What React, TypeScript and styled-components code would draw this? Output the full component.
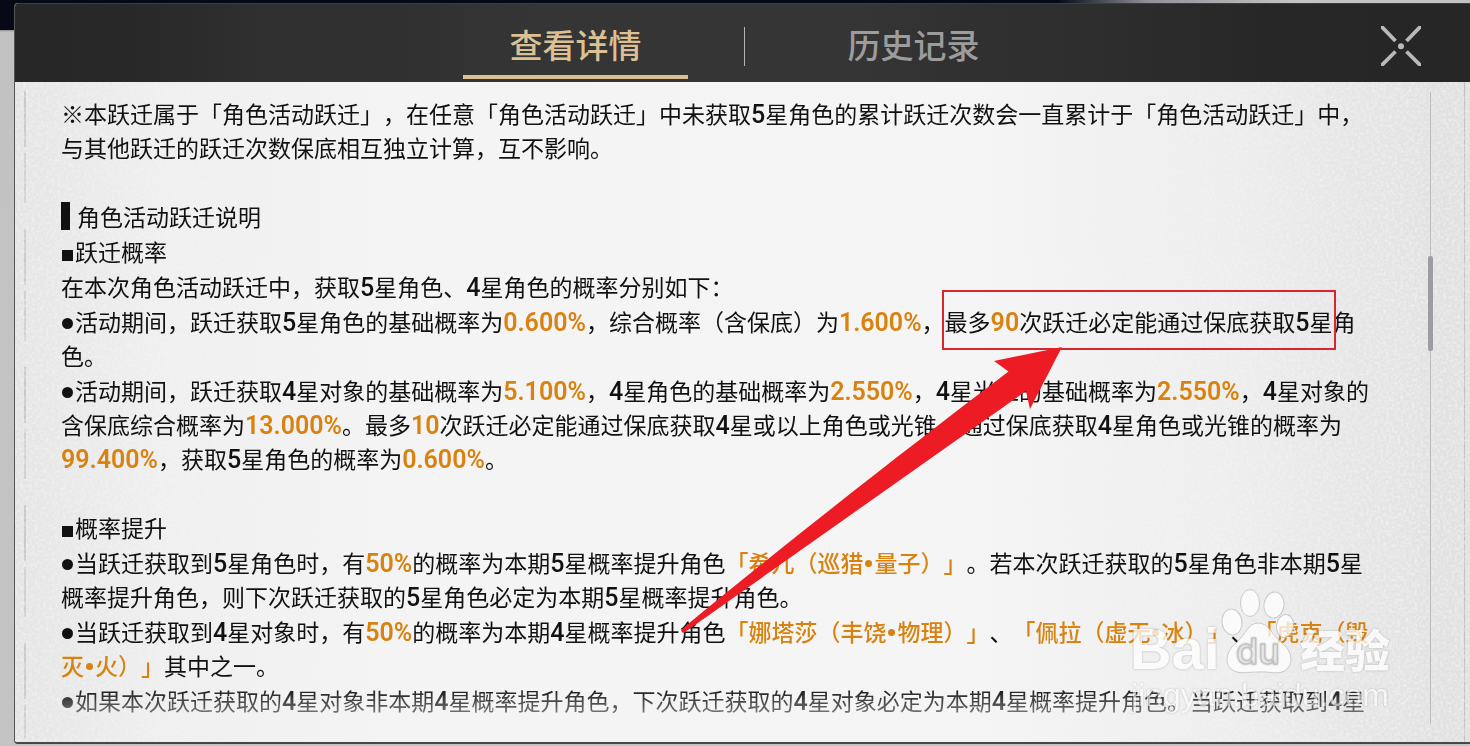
import React from "react";
import styled, { createGlobalStyle } from "styled-components";

const GlobalStyle = createGlobalStyle`
  * { box-sizing: border-box; }
  body {
    margin: 0;
    background: #060a16;
    font-family: "Noto Sans CJK SC", sans-serif;
    text-spacing-trim: space-all;
  }
`;

const Page = styled.div`
  display: flex;
  flex-direction: column;
  min-height: 100vh;
  padding-top: 3px;
  overflow: hidden;
  background: linear-gradient(90deg, #060a16 0%, #060a16 72%, #8f9196 78%, #c4c4c4 88%);
`;

const Stage = styled.div`
  flex: 1;
  display: flex;
  flex-direction: column;
  padding: 0 0 2px 14px;
  background: linear-gradient(180deg, #060a16 0, #060a16 27px, #8c8c8c 27px, #c2c2c2 29px, #c4c4c4 100%);
`;

const Panel = styled.main`
  position: relative;
  flex: 1;
  display: flex;
  flex-direction: column;
  border-left: 1px solid #555;
  border-bottom: 2px solid #46474a;
  border-radius: 4px 0 0 4px;
  overflow: hidden;
  background: #f4f4f4;
`;

const Header = styled.header`
  position: relative;
  z-index: 1;
  height: 79px;
  display: grid;
  grid-template-columns: 1fr auto 1fr;
  padding-left: 4px;
  border-top: 1px solid #3c3d3f;
  background: linear-gradient(90deg, #272727 0%, #282828 8%, #303030 17%, #303030 26%, #353535 36%, #353535 58%, #303030 66%, #2e2e2e 74%, #272727 86%, #262626 100%);
`;

const Tabs = styled.nav`
  grid-column: 2;
  display: flex;
  align-items: center;
  gap: 56px;
`;

const Tab = styled.button<{ $active?: boolean }>`
  width: 225px;
  height: 72px;
  align-self: flex-start;
  margin: 3px 0 0;
  padding: 6px 0 0;
  border: 0;
  border-bottom: 4px solid ${(p) => (p.$active ? "#dbc093" : "transparent")};
  background: none;
  color: ${(p) => (p.$active ? "#dbc093" : "#9c9c9c")};
  font: 500 33px/56px "Noto Sans CJK SC", sans-serif;
  cursor: pointer;
`;

const TabDivider = styled.span`
  width: 1px;
  height: 39px;
  margin-top: 6px;
  background: #b4b4b4;
`;

const Close = styled.button`
  justify-self: end;
  align-self: center;
  width: 40px;
  height: 40px;
  margin: 6px 49px 0 0;
  padding: 0;
  border: 0;
  background: none;
  cursor: pointer;
  svg { display: block; }
`;

const Body = styled.div`
  position: relative;
  flex: 1;
  display: flex;
  padding-left: 9px;
  background: linear-gradient(90deg, #e5e5e5 0%, #efefef 10%, #f4f4f4 26%, #f5f5f5 66%, #ededed 84%, #e1e1e1 98%);
`;

const Grain = styled.svg`
  position: absolute;
  inset: 0;
  width: 100%;
  height: 100%;
  opacity: 0.4;
  pointer-events: none;
  mask-image: linear-gradient(90deg, #000 0%, transparent 24%, transparent 66%, #000 94%);
`;

const Rail = styled.span`
  width: 2px;
  margin: 9px 0 4px;
  background: repeating-linear-gradient(180deg, #c9c9c9 0, #c9c9c9 56px, transparent 56px, transparent 62px, #d0d0d0 62px, #d0d0d0 112px, transparent 112px, transparent 138px);
`;

const Article = styled.article`
  position: relative;
  flex: 1;
  display: flex;
  flex-direction: column;
  gap: 35px;
  padding: 14px 52px 25px 35px;
  color: #111;
  font-size: 23px;
  line-height: 34px;
  mask-image: linear-gradient(180deg, #000 0, #000 605px, transparent 665px);
`;

const Section = styled.section`
  display: flex;
  flex-direction: column;
  gap: 1px;
`;

const Text = styled.p`
  margin: 0;
`;

const Title = styled.h2`
  display: flex;
  align-items: center;
  gap: 7px;
  margin: 0;
  font-size: 23px;
  font-weight: 400;
  &::before {
    content: "";
    width: 9px;
    height: 28px;
    background: #111;
  }
`;

const SubTitle = styled.h3`
  margin: 0;
  font-size: 23px;
  font-weight: 400;
`;

const Mark = styled.span<{ $round?: boolean }>`
  display: inline-block;
  width: 11px;
  height: 11px;
  margin: 0 2px 0 1px;
  vertical-align: ${(p) => (p.$round ? "2px" : "baseline")};
  border-radius: ${(p) => (p.$round ? "50%" : "0")};
  background: #111;
`;

const Num = styled.span`
  font-family: Roboto, sans-serif;
  font-size: 25px;
  font-weight: 500;
  line-height: 1;
`;

const Rate = styled(Num)`
  color: #d9820f;
  font-weight: 600;
`;

const Name = styled.span`
  color: #d9820f;
  font-weight: 500;
`;

const Dot = styled.span`
  display: inline-block;
  width: 7px;
  height: 7px;
  margin: 0 2px;
  vertical-align: 5px;
  border-radius: 50%;
  background: #d9820f;
`;

const Track = styled.div`
  position: relative;
  width: 5px;
  margin: 10px 31px 18px 0;
  background: linear-gradient(90deg, transparent 2px, #bcbcbc 2px, #bcbcbc 3px, transparent 3px);
`;

const Thumb = styled.div`
  height: 95px;
  margin-top: 164px;
  border-radius: 2px;
  background: #9b9da3;
`;

const Edge = styled.span`
  width: 1px;
  margin-right: 5px;
  background: #c0c0c0;
`;

const Highlight = styled.div`
  position: absolute;
  left: 927px;
  top: 287px;
  width: 394px;
  height: 60px;
  border: 2px solid #d8262c;
  z-index: 2;
`;

const Arrow = styled.svg`
  position: absolute;
  left: 665px;
  top: 343px;
  z-index: 2;
`;

const Watermark = styled.div`
  position: absolute;
  right: 80px;
  bottom: 29px;
  z-index: 3;
  display: flex;
  flex-direction: column;
  align-items: center;
  color: #fff;
  opacity: 0.75;
  text-shadow: 0 0 2px rgba(120, 120, 120, 0.8);
  pointer-events: none;
`;

const Brand = styled.div`
  display: flex;
  align-items: flex-end;
  height: 88px;
  svg { margin-bottom: 3px; }
`;

const Latin = styled.span`
  font: 700 58px/56px "Liberation Sans", sans-serif;
`;

const Han = styled.span`
  margin-left: 6px;
  font: 900 45px/56px "Noto Sans CJK SC", sans-serif;
`;

const Site = styled.span`
  font: 400 32px/36px "Liberation Sans", sans-serif;
  opacity: 0.8;
`;

export default function App() {
  return (
    <>
      <GlobalStyle />
      <Page>
        <Stage>
          <Panel>
            <Header>
              <Tabs>
                <Tab $active>查看详情</Tab>
                <TabDivider />
                <Tab>历史记录</Tab>
              </Tabs>
              <Close aria-label="关闭">
                <svg width="40" height="40" viewBox="0 0 40 40" stroke="#b9b9b9" strokeWidth="3.8" fill="none">
                  <path d="M0 0L14.500 15M40 0L25.500 15M0 40L14.500 25.500M40 40L25.500 25.500" />
                  <circle cx="20" cy="20.300" r="3" fill="#b9b9b9" stroke="none" />
                </svg>
              </Close>
            </Header>
            <Body>
              <Grain aria-hidden="true">
                <filter id="grain" x="0" y="0" width="100%" height="100%">
                  <feTurbulence type="fractalNoise" baseFrequency="0.35" numOctaves="2" seed="4" />
                  <feColorMatrix values="0 0 0 0 1  0 0 0 0 1  0 0 0 0 1  2.4 0 0 0 -0.95" />
                </filter>
                <rect width="100%" height="100%" filter="url(#grain)" />
              </Grain>
              <Rail />
              <Article>
                <Section>
                  <Text>
                    ※本跃迁属于「角色活动跃迁」，在任意「角色活动跃迁」中未获取<Num>5</Num>星角色的累计跃迁次数会一直累计于「角色活动跃迁」中，与其他跃迁的跃迁次数保底相互独立计算，互不影响。
                  </Text>
                </Section>
                <Section>
                  <Title>角色活动跃迁说明</Title>
                  <SubTitle><Mark />跃迁概率</SubTitle>
                  <Text>
                    在本次角色活动跃迁中，获取<Num>5</Num>星角色、<Num>4</Num>星角色的概率分别如下：
                  </Text>
                  <Text>
                    <Mark $round />活动期间，跃迁获取<Num>5</Num>星角色的基础概率为<Rate>0.600%</Rate>，综合概率（含保底）为<Rate>1.600%</Rate>，最多<Rate>90</Rate>次跃迁必定能通过保底获取<Num>5</Num>星角色。
                  </Text>
                  <Text>
                    <Mark $round />活动期间，跃迁获取<Num>4</Num>星对象的基础概率为<Rate>5.100%</Rate>，<Num>4</Num>星角色的基础概率为<Rate>2.550%</Rate>，<Num>4</Num>星光锥的基础概率为<Rate>2.550%</Rate>，<Num>4</Num>星对象的含保底综合概率为<Rate>13.000%</Rate>。最多<Rate>10</Rate>次跃迁必定能通过保底获取<Num>4</Num>星或以上角色或光锥，通过保底获取<Num>4</Num>星角色或光锥的概率为<Rate>99.400%</Rate>，获取<Num>5</Num>星角色的概率为<Rate>0.600%</Rate>。
                  </Text>
                </Section>
                <Section>
                  <SubTitle><Mark />概率提升</SubTitle>
                  <Text>
                    <Mark $round />当跃迁获取到<Num>5</Num>星角色时，有<Rate>50%</Rate>的概率为本期<Num>5</Num>星概率提升角色<Name>「希儿（巡猎<Dot />量子）」</Name>。若本次跃迁获取的<Num>5</Num>星角色非本期<Num>5</Num>星概率提升角色，则下次跃迁获取的<Num>5</Num>星角色必定为本期<Num>5</Num>星概率提升角色。
                  </Text>
                  <Text>
                    <Mark $round />当跃迁获取到<Num>4</Num>星对象时，有<Rate>50%</Rate>的概率为本期<Num>4</Num>星概率提升角色<Name>「娜塔莎（丰饶<Dot />物理）」</Name>、<Name>「佩拉（虚无<Dot />冰）」</Name>、<Name>「虎克（毁灭<Dot />火）」</Name>其中之一。
                  </Text>
                  <Text>
                    <Mark $round />如果本次跃迁获取的<Num>4</Num>星对象非本期<Num>4</Num>星概率提升角色，下次跃迁获取的<Num>4</Num>星对象必定为本期<Num>4</Num>星概率提升角色。当跃迁获取到<Num>4</Num>星
                  </Text>
                </Section>
              </Article>
              <Track><Thumb /></Track>
              <Edge />
            </Body>
            <Highlight />
            <Arrow width="384" height="290" viewBox="0 0 384 290" aria-hidden="true">
              <path d="M382 1L314 15L328.500 25.500C220 108 100 202 1 284Q2 288 5 286L346 45L350 63Z" fill="#ed1c24" />
            </Arrow>
            <Watermark>
              <Brand>
                <Latin>Bai</Latin>
                <svg width="74" height="86" viewBox="0 0 74 86" fill="#fff" stroke="#bdbdbd" strokeWidth="1">
                  <ellipse cx="12" cy="34" rx="10" ry="13" transform="rotate(-8 12 34)" />
                  <ellipse cx="30" cy="15" rx="9.500" ry="13.500" />
                  <ellipse cx="54" cy="17" rx="10" ry="13" transform="rotate(8 54 17)" />
                  <ellipse cx="65" cy="38" rx="8.500" ry="11.500" transform="rotate(8 65 38)" />
                  <path d="M38 35C49 35 51 46 61 54C70 61 75 73 67 81C60 88 50 83 38 84C26 84 19 87 11 81C3 73 8 61 17 54C26 46 28 35 38 35Z" />
                  <text x="38" y="76" textAnchor="middle" fontFamily="Inter, sans-serif" fontSize="36" fontWeight="500" fill="#f4f4f4" stroke="#b4b4b4">du</text>
                </svg>
                <Han>经验</Han>
              </Brand>
              <Site>jingyan.baidu.com</Site>
            </Watermark>
          </Panel>
        </Stage>
      </Page>
    </>
  );
}
